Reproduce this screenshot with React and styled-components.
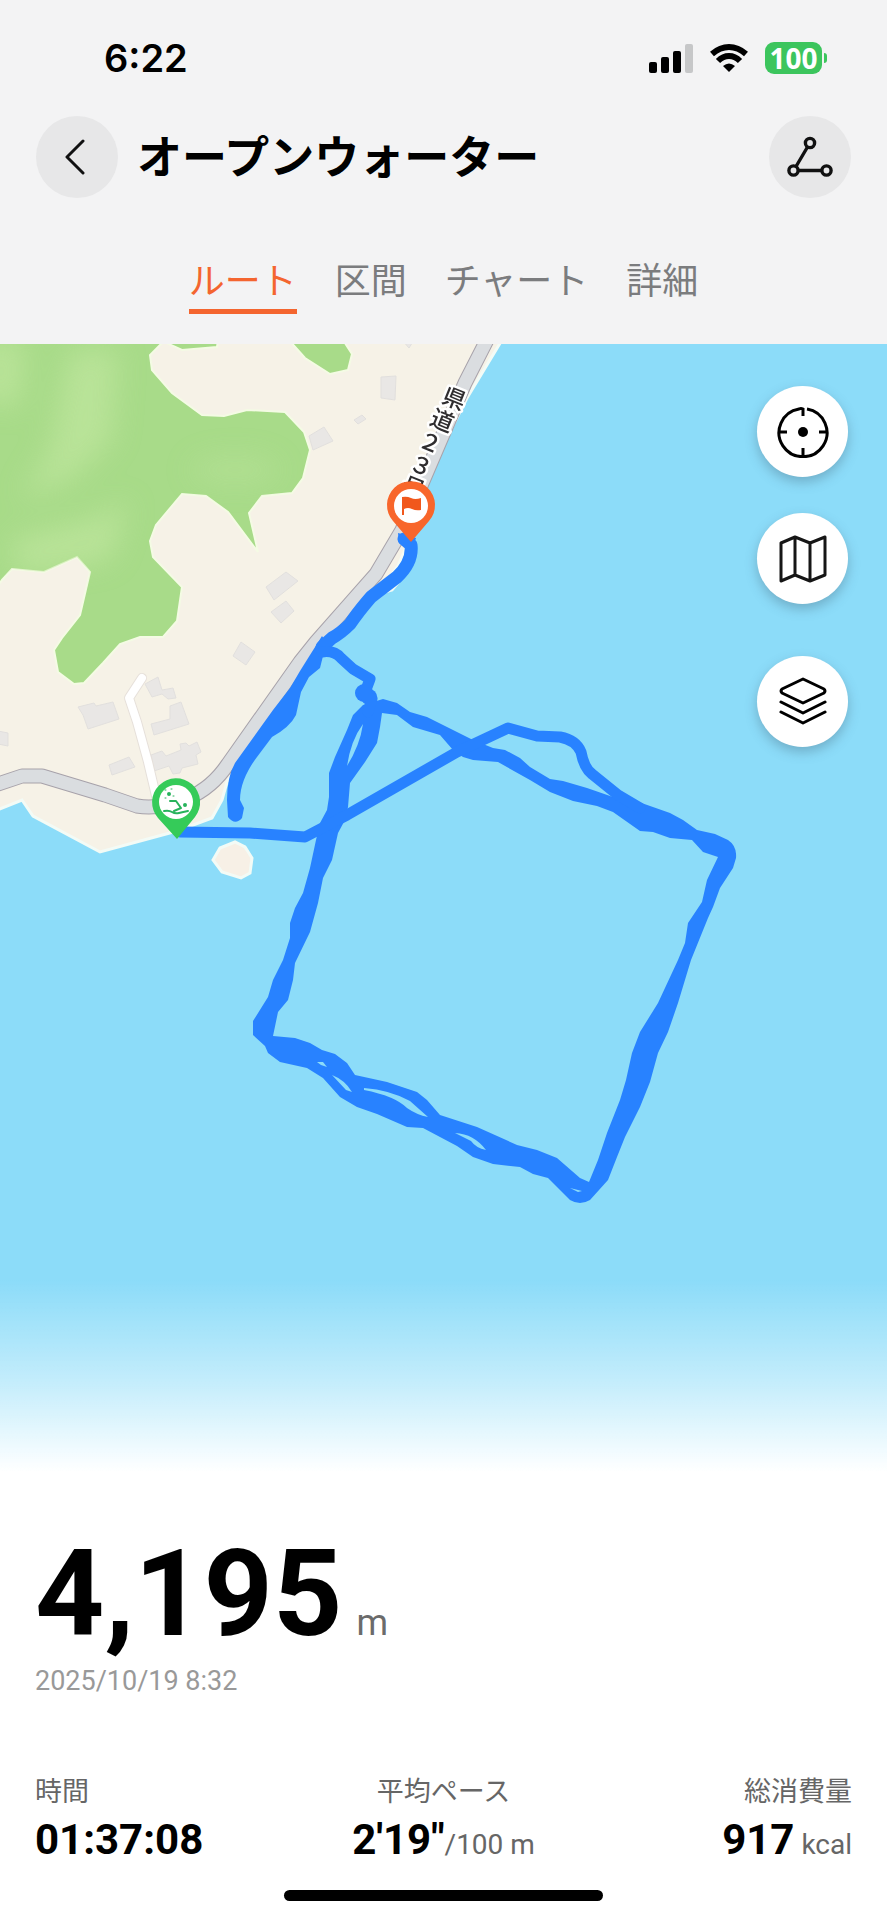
import styled, { createGlobalStyle } from "styled-components";

const GlobalStyle = createGlobalStyle`
  * {
    box-sizing: border-box;
  }

  body {
    margin: 0;
    background: #ffffff;
    color: #000000;
    font-family: Roboto, "Noto Sans CJK JP", sans-serif;
  }

  button {
    border: none;
    padding: 0;
    color: inherit;
    font-family: inherit;
    cursor: pointer;
  }
`;

const Screen = styled.div`
  width: 100%;
  display: flex;
  flex-direction: column;
`;

const Top = styled.header`
  background: #f3f3f4;
  padding-bottom: 30px;
`;

const StatusBar = styled.div`
  display: flex;
  align-items: center;
  justify-content: space-between;
  height: 116px;
  padding: 0 60px 0 104px;
`;

const Clock = styled.time`
  font-family: Inter, sans-serif;
  font-size: 38px;
  font-weight: 600;
  line-height: 48px;
`;

const StatusIcons = styled.div`
  display: flex;
  align-items: center;
  gap: 17px;
`;

const Battery = styled.div`
  display: flex;
  align-items: center;
  gap: 2px;

  &::after {
    content: "";
    width: 3px;
    height: 10px;
    border-radius: 0 3px 3px 0;
    background: #3cc55d;
  }
`;

const BatteryBody = styled.span`
  width: 57px;
  height: 32px;
  border-radius: 9px;
  background: #3cc55d;
  color: #ffffff;
  font-family: "Noto Sans", sans-serif;
  font-size: 28px;
  font-weight: 700;
  line-height: 32px;
  text-align: center;
`;

const TitleBar = styled.div`
  display: flex;
  align-items: center;
  gap: 19px;
  height: 82px;
  padding: 0 36px;
`;

const RoundButton = styled.button`
  flex-shrink: 0;
  display: flex;
  align-items: center;
  justify-content: center;
  width: 82px;
  height: 82px;
  border-radius: 50%;
  background: #e7e7e8;
`;

const Title = styled.h1`
  flex: 1;
  margin: 0;
  padding-top: 4px;
  font-size: 45px;
  font-weight: 700;
  line-height: 64px;
`;

const Tabs = styled.nav`
  display: flex;
  justify-content: center;
  gap: 38px;
  padding-top: 56px;
`;

const Tab = styled.button`
  height: 60px;
  background: none;
  border-bottom: 5px solid ${({ $active }) => ($active ? "#f4652f" : "transparent")};
  color: ${({ $active }) => ($active ? "#f4652f" : "#7b7c7e")};
  font-size: 36px;
  line-height: 52px;
`;

const MapArea = styled.main`
  position: relative;
`;

const MapSvg = styled.svg`
  display: block;
  width: 100%;
  height: auto;
`;

const MapTools = styled.div`
  position: absolute;
  top: 42px;
  right: 39px;
  display: flex;
  flex-direction: column;
  gap: 52px;
`;

const ToolGroup = styled.div`
  display: flex;
  flex-direction: column;
  gap: 36px;
`;

const MapButton = styled(RoundButton)`
  width: 91px;
  height: 91px;
  background: #ffffff;
  box-shadow: 0 5px 12px rgba(60, 90, 110, 0.35);
`;

const Summary = styled.section`
  padding: 50px 35px 0;
`;

const Distance = styled.p`
  margin: 0;
  font-size: 121px;
  font-weight: 700;
  line-height: 128px;
`;

const DistanceUnit = styled.span`
  margin-left: 14px;
  color: #6b6b6b;
  font-size: 36px;
  font-weight: 400;
  line-height: 1;
`;

const StartTime = styled.time`
  display: block;
  color: #999999;
  font-size: 27px;
  line-height: 46px;
`;

const Stats = styled.dl`
  display: grid;
  grid-template-columns: 1fr 1fr 1fr;
  margin: 66px 0 0;
`;

const Stat = styled.div`
  text-align: ${({ $align }) => $align};
  white-space: nowrap;
`;

const StatLabel = styled.dt`
  color: #666666;
  font-size: 27px;
  line-height: 44px;
`;

const StatValue = styled.dd`
  margin: 0;
  font-size: 42px;
  font-weight: 700;
  line-height: 52px;
`;

const StatUnit = styled.span`
  color: #666666;
  font-size: 28px;
  font-weight: 400;
  line-height: 1;
`;

const HomeIndicator = styled.div`
  width: 36%;
  height: 11px;
  margin: 24px auto 19px;
  border-radius: 6px;
  background: #000000;
`;

const tabs = ["ルート", "区間", "チャート", "詳細"];

const stats = [
  { label: "時間", value: "01:37:08", align: "left" },
  { label: "平均ペース", value: "2'19\"", unit: "/100 m", align: "center" },
  { label: "総消費量", value: "917", unit: " kcal", align: "right" },
];

const land =
  "M-5 340 H502 L467 398 L438 455 L420 505 L407 545 L398 566 L384 585 L397 584 L392 590 L378 594 L330 642 L301 678 L275 712 L242 760 L227 782 L222 800 L212 818 L177 831 L100 852 L33 816 L22 800 L-5 811 Z";

const forest =
  "M-5 340 H165 L150 355 L152 370 L172 393 L202 415 L224 416 L247 410 L285 412 L304 432 L310 450 L303 478 L292 493 L262 496 L249 513 L258 552 L228 512 L206 496 L182 494 L156 525 L150 541 L153 557 L182 587 L177 621 L163 637 L140 637 L120 644 L103 663 L84 683 L74 684 L58 672 L54 650 L62 638 L80 615 L90 572 L77 557 L44 572 L12 569 L2 580 L-5 590 Z M160 340 L182 350 L217 347 L218 340 Z M289 340 L305 358 L330 374 L348 370 L352 354 L343 340 Z";

const road =
  "M488 338 L465 383 L402 530 L376 574 L316 642 L300 662 L228 764 Q212 788 188 798 Q160 810 137 806 L105 795 L42 776 L22 776 L-5 785";

const buildings =
  "M381 377 l15 -1 l-1 24 l-14 -2z M354 420 l8 -5 l4 4 l-8 5z M309 436 l15 -9 l9 14 l-20 9z M402 340 h12 l-5 8z M266 587 l20 -15 l12 9 l-24 19z M271 612 l15 -11 l8 10 l-13 12z M233 656 l8 -14 l14 10 l-9 13z M145 684 l13 -7 l4 13 l11 -2 l3 10 l-8 1 l-6 -5 l-10 3z M78 707 l16 -4 l2 3 l17 -4 l6 17 l-31 10 l-5 -14z M151 724 l19 -5 v-13 l11 -4 l8 22 l-35 11z M109 765 l20 -8 l6 10 l-23 8z M151 755 l11 -4 l4 5 l15 -6 l-1 -6 l6 -1 l3 3 l8 -4 l4 10 l-5 3 l2 9 l-16 4 l-2 5 l-7 1 l-4 -8 l-15 5z M-2 731 l10 2 v13 l-10 -2z";

const loop =
  "M363 705 L383 699 L397 703 L410 712 L427 717 L447 727 L473 740 L493 748 L505 750 L520 758 L530 767 L550 779 L563 781 L587 788 L613 797 L633 800 L670 813 L683 820 L697 830 L715 834 L728 840 Q737 846 736 858 L733 868 L720 888 L713 907 L708 918 L691 960 L678 1003 L668 1032 L658 1053 L650 1082 L640 1107 L625 1137 L617 1157 L608 1180 L590 1200 Q580 1206 570 1200 L548 1178 L533 1174 L520 1167 L493 1164 L473 1157 L457 1146 L423 1128 L407 1127 L377 1114 L357 1107 L340 1097 L323 1078 L307 1068 L280 1062 L268 1053 L265 1046 L253 1035 V1021 L268 997 L273 980 L283 960 L290 938 V923 L295 908 L303 893 L310 868 L316 840 L320 823 L327 810 L329 797 V773 L335 757 L347 730 L353 715 Z M382 713 L380 727 L377 743 L365 762 L350 783 L348 807 L345 820 L338 833 L332 860 L323 878 L318 903 L310 932 L295 963 L293 980 L288 1000 L278 1012 L273 1036 L295 1038 L310 1043 L322 1050 L335 1054 L347 1063 L355 1075 L387 1082 L417 1092 L427 1100 L440 1115 L477 1127 L517 1145 L537 1150 L557 1158 L580 1178 L589 1182 L598 1160 L607 1133 L620 1100 L626 1080 L632 1053 L640 1032 L658 1003 L678 960 L685 943 L688 923 L702 902 L707 880 L718 857 L703 852 L692 840 L670 838 L653 832 L640 831 L613 812 L597 806 L573 801 L550 792 L530 780 L498 762 L473 760 L463 757 L453 750 L440 735 L413 727 L397 715 Z";

// narrow gaps of open water between the overlapping laps
const gaps =
  "M363 724 Q351 740 347 766 Q360 745 363 724Z M317 1062 L323 1062 L327 1067 L321 1065Z M332 1075 Q345 1080 352 1092 L346 1090Z M364 1088 Q390 1090 410 1101 L428 1117 Q417 1115 407 1108 Q395 1096 364 1090Z M455 1133 Q474 1134 486 1150 Q476 1148 471 1141Z M570 1188 l12 3 l-4 1z";

const shore =
  "M322 636 L310 655 L300 671 L290 688 L273 710 L235 763 Q227 777 227 800 L228 817 Q235 826 242 818 L244 808 L240 800 Q240 780 257 757 L272 737 Q290 727 296 715 L301 692 L309 677 L320 668 L323 656 L330 648 Z";

const roadName = [
  { char: "県", x: 455, y: 397 },
  { char: "道", x: 443, y: 419 },
  { char: "２", x: 431, y: 441 },
  { char: "３", x: 422, y: 464 },
  { char: "号", x: 414, y: 486 },
];

function SignalIcon() {
  return (
    <svg width="44" height="29" viewBox="0 0 44 29" aria-hidden="true">
      <rect x="0" y="18" width="8" height="11" rx="2" />
      <rect x="12" y="13" width="8" height="16" rx="2" />
      <rect x="24" y="7" width="8" height="22" rx="2" />
      <rect x="36" y="0" width="8" height="29" rx="2" fill="#c6c7c8" />
    </svg>
  );
}

function WifiIcon() {
  return (
    <svg width="38" height="28" viewBox="0 0 38 28" fill="none" stroke="#000" aria-hidden="true">
      <path d="M2 10 Q10 3 19 3 Q28 3 36 10" strokeWidth="6" />
      <path d="M8 17 Q13 12 19 12 Q25 12 30 17" strokeWidth="6" />
      <path d="M13 22 Q19 17 25 22 L19 28Z" fill="#000" stroke="none" />
    </svg>
  );
}

function BackIcon() {
  return (
    <svg width="26" height="36" viewBox="0 0 26 36" fill="none" stroke="#111" strokeWidth="3" strokeLinecap="round" strokeLinejoin="round">
      <path d="M19 2 L3 18 L19 34" />
    </svg>
  );
}

function TrackIcon() {
  return (
    <svg width="46" height="42" viewBox="0 0 46 42" fill="none" stroke="#111" strokeWidth="3.4">
      <circle cx="23" cy="7" r="4.6" />
      <circle cx="6.5" cy="34.5" r="4.6" />
      <circle cx="39.5" cy="34.5" r="4.6" />
      <path d="M20.5 11 L9 30.5 M11 34.5 H35" />
    </svg>
  );
}

function LocateIcon() {
  return (
    <svg width="52" height="52" viewBox="0 0 52 52" fill="none" stroke="#000" strokeWidth="3">
      <path d="M30 3 A24 24 0 1 1 22 3 Q24 2 26 3 V10 M2 26 H10 M42 26 H50 M26 42 V50" />
      <circle cx="26" cy="26" r="5" fill="#000" stroke="none" />
    </svg>
  );
}

function MapIcon() {
  return (
    <svg width="48" height="48" viewBox="0 0 48 48" fill="none" stroke="#161616" strokeWidth="3" strokeLinejoin="round">
      <path d="M2 8 L16 2 L31 8 L46 2 V40 L31 46 L16 40 L2 46 Z M16 2 V40 M31 8 V46" />
    </svg>
  );
}

function LayersIcon() {
  return (
    <svg width="48" height="50" viewBox="0 0 48 50" fill="none" stroke="#000" strokeWidth="3" strokeLinecap="round" strokeLinejoin="round">
      <path d="M24 2 L45 12 Q47 14 45 16 L24 26 L3 16 Q1 14 3 12 Z" />
      <path d="M2 25 L24 36 L46 25 M2 35 L24 46 L46 35" />
    </svg>
  );
}

function RouteMap() {
  return (
    <MapSvg viewBox="0 344 887 1136" role="img" aria-label="ルート">
      <defs>
        <linearGradient id="fade" x1="0" y1="0" x2="0" y2="1">
          <stop offset="0" stopColor="#fff" stopOpacity="0" />
          <stop offset="0.5" stopColor="#fff" stopOpacity="0.48" />
          <stop offset="0.96" stopColor="#fff" />
        </linearGradient>
        <filter id="soft" x="-50%" y="-50%" width="200%" height="200%">
          <feGaussianBlur stdDeviation="14" />
        </filter>
        <clipPath id="forestClip">
          <path d={forest} />
        </clipPath>
      </defs>

      <rect y="344" width="887" height="1136" fill="#8cdcf9" />
      <path d={land} fill="#f6f2e7" stroke="#f3fbf6" strokeWidth="3" />
      <path
        d="M213 860 L220 848 L235 842 L245 847 L252 858 L250 873 L241 878 L222 872 Z"
        fill="#f7f0e6"
        stroke="#f3fbf6"
        strokeWidth="3"
      />

      <path d={forest} fill="#a8db89" stroke="#f4fbe4" strokeWidth="2" />
      <g clipPath="url(#forestClip)" fill="#bde59c" opacity="0.8">
        <g filter="url(#soft)">
          <path d="M70 350 H118 L112 440 L70 480 L20 500 L50 450 Z" />
          <path d="M-20 340 H25 L20 405 H-20 Z" />
          <path d="M10 540 L90 520 L130 500 L110 560 L20 575 Z" />
          <ellipse cx="235" cy="470" rx="45" ry="14" opacity="0.6" />
        </g>
      </g>

      <path d={buildings} fill="#e9e7e5" stroke="#e1dfdd" strokeWidth="1" />

      <g fill="none" strokeLinejoin="round">
        <path d="M142 678 L129 698 L137 722 L148 762 L157 800" stroke="#e6e0da" strokeWidth="10" strokeLinecap="round" />
        <path d="M142 678 L129 698 L137 722 L148 762 L157 800" stroke="#fff" strokeWidth="8" strokeLinecap="round" />
        <path d={road} stroke="#a7a2aa" strokeWidth="15" />
        <path d={road} stroke="#dadde0" strokeWidth="13" />
      </g>

      <g
        fontFamily='"Noto Sans CJK JP", sans-serif'
        fontSize="23"
        fontWeight="500"
        fill="#2f2d2f"
        stroke="#fff"
        strokeWidth="5"
        strokeLinejoin="round"
        paintOrder="stroke"
        textAnchor="middle"
        dominantBaseline="central"
      >
        {roadName.map(({ char, x, y }) => (
          <text key={char} transform={`translate(${x} ${y}) rotate(22)`}>
            {char}
          </text>
        ))}
      </g>

      <g fill="#2882ff">
        <path d={loop} fillRule="evenodd" />
        <path d={shore} />
        <path d="M398 533 L416 538 L412 550 L399 543 Z" />
        <circle cx="364" cy="693" r="9" />
        <circle cx="369" cy="697" r="8" />
      </g>
      <g fill="none" stroke="#2882ff" strokeWidth="11" strokeLinecap="round" strokeLinejoin="round">
        <path d="M180 832 L250 833 L305 837 L324 827 L347 815 L457 752 L508 728 L537 736 L560 737 Q576 740 581 752 Q584 768 592 774 L618 795 L640 808" />
        <path d="M404 539 L411 545 Q413 562 397 577 L371 597 Q358 612 350 624 Q341 633 332 638 L322 647" strokeWidth="13" />
        <path d="M322 652 Q334 650 341 658 L353 669 L370 679 L364 695 L372 699 L368 712" />
      </g>
      <path d={gaps} fill="#8cdcf9" />

      <path d="M411 542 L393 521 A24 24 0 1 1 429 521 Z" fill="#f8662b" />
      <circle cx="411" cy="506" r="17" fill="#fff" />
      <path d="M402 497 Q407 496 411 498 T421 498 V510 Q416 511 412 509 T404 509 V515 H402 Z" fill="#f1581c" />

      <path d="M177 839 L158 818 A24 24 0 1 1 195 817 Z" fill="#35cb59" />
      <circle cx="176" cy="802" r="17" fill="#fff" />
      <g fill="none" stroke="#27b35b" strokeWidth="2" strokeLinecap="round" strokeLinejoin="round">
        <path d="M170 801 L176 801 L181 808 L174 811" />
        <path d="M164 811 Q169 810 172 812 T179 813 T188 811" />
        <circle cx="185" cy="805" r="1" />
        <circle cx="169" cy="794" r="1" />
        <path d="M165 790 h1 M171 789 h1 M165 798 h1 M173 796 h1" strokeWidth="1" />
      </g>

      <rect y="1280" width="887" height="200" fill="url(#fade)" />
    </MapSvg>
  );
}

function App() {
  return (
    <Screen>
      <GlobalStyle />
      <Top>
        <StatusBar>
          <Clock>6:22</Clock>
          <StatusIcons>
            <SignalIcon />
            <WifiIcon />
            <Battery>
              <BatteryBody>100</BatteryBody>
            </Battery>
          </StatusIcons>
        </StatusBar>
        <TitleBar>
          <RoundButton aria-label="戻る">
            <BackIcon />
          </RoundButton>
          <Title>オープンウォーター</Title>
          <RoundButton aria-label="軌跡">
            <TrackIcon />
          </RoundButton>
        </TitleBar>
        <Tabs>
          {tabs.map((tab, index) => (
            <Tab key={tab} $active={index === 0}>
              {tab}
            </Tab>
          ))}
        </Tabs>
      </Top>

      <MapArea>
        <RouteMap />
        <MapTools>
          <ToolGroup>
            <MapButton aria-label="現在地">
              <LocateIcon />
            </MapButton>
            <MapButton aria-label="地図">
              <MapIcon />
            </MapButton>
          </ToolGroup>
          <MapButton aria-label="レイヤー">
            <LayersIcon />
          </MapButton>
        </MapTools>
      </MapArea>

      <Summary>
        <Distance>
          4,195<DistanceUnit>m</DistanceUnit>
        </Distance>
        <StartTime>2025/10/19 8:32</StartTime>
        <Stats>
          {stats.map(({ label, value, unit, align }) => (
            <Stat key={label} $align={align}>
              <StatLabel>{label}</StatLabel>
              <StatValue>
                {value}
                {unit && <StatUnit>{unit}</StatUnit>}
              </StatValue>
            </Stat>
          ))}
        </Stats>
      </Summary>
      <HomeIndicator />
    </Screen>
  );
}

export default App;
